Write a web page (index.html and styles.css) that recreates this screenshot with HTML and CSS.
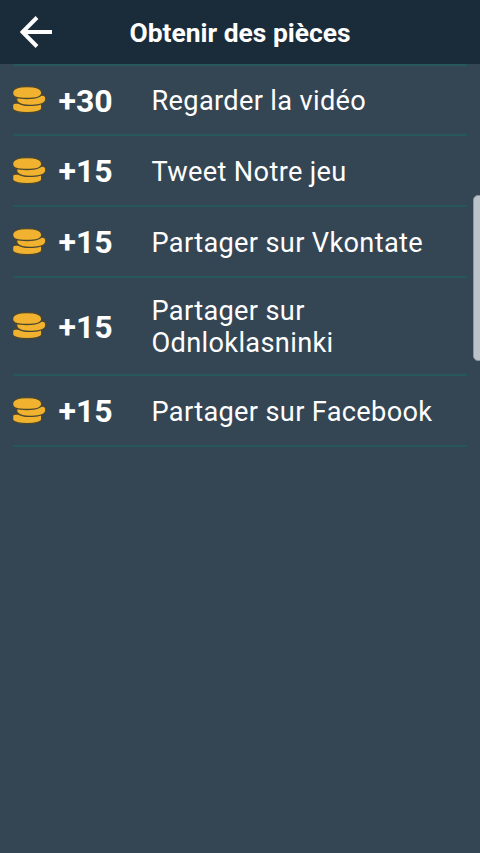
FILE: index.html
```html
<!DOCTYPE html>
<html lang="fr">
<head>
<meta charset="utf-8">
<title>Obtenir des pièces</title>
<link rel="stylesheet" href="styles.css">
</head>
<body>
<svg width="0" height="0" class="defs" aria-hidden="true">
  <symbol id="coins" viewBox="0 0 34 28">
    <g fill="#f0b22f" stroke="#4b472f" stroke-width="1.3">
      <path d="M-.4 19Q-.4 17 3 17H26Q28.7 17 28.7 19V22.3C28.7 28.2-.4 28.2-.4 22.3Z"/>
      <path d="M3.6 13C3.6 10 6 9 16 9H29C32.6 9 33.3 12 32.6 14.6C30.5 20.4 9 20.8 4.8 16.2Q3.6 15 3.6 13Z"/>
      <path d="M-.4 7C-.4 2.5 5 .7 14 .7S28.7 2.5 28.7 7S23 12.5 14 12.5S-.4 11.5-.4 7Z"/>
    </g>
  </symbol>
</svg>
<header class="bar">
  <svg class="back" viewBox="0 0 32 32"><path d="M17 1.5 2.5 16 17 30.5M3 16H32" fill="none" stroke="#fff" stroke-width="4"/></svg>
  <h1 class="title">Obtenir des pièces</h1>
</header>
<ul class="list">
  <li class="row first"><svg class="coin"><use href="#coins"/></svg><b class="amount">+30</b><span class="label">Regarder la vidéo</span></li>
  <li class="row"><svg class="coin"><use href="#coins"/></svg><b class="amount">+15</b><span class="label">Tweet Notre jeu</span></li>
  <li class="row"><svg class="coin"><use href="#coins"/></svg><b class="amount">+15</b><span class="label">Partager sur Vkontate</span></li>
  <li class="row tall"><svg class="coin"><use href="#coins"/></svg><b class="amount">+15</b><span class="label">Partager sur Odnloklasninki</span></li>
  <li class="row"><svg class="coin"><use href="#coins"/></svg><b class="amount">+15</b><span class="label">Partager sur Facebook</span></li>
</ul>
<div class="scrollbar"></div>
</body>
</html>
```
FILE: styles.css
```css
* { box-sizing: border-box; }
body {
  margin: 0;
  height: 853px;
  overflow: hidden;
  position: relative;
  background: #344554;
  color: #fff;
  font-family: Roboto, "Liberation Sans", sans-serif;
}
.defs { position: absolute; }
.bar {
  display: grid;
  grid-template-columns: 60px 1fr 60px;
  align-items: center;
  height: 64px;
  background: #1a2b3a;
}
.back { width: 32px; height: 32px; margin-left: 20px; }
.title {
  margin: 2px 0 0;
  text-align: center;
  white-space: nowrap;
  font-size: 26.4px;
  line-height: 32px;
  font-weight: 700;
}
.list {
  list-style: none;
  margin: 0 13px;
  padding: 0;
  border-top: 2px solid #26575a;
}
.row {
  display: grid;
  grid-template-columns: 45.5px 93px 1fr;
  align-items: center;
  height: 71px;
  border-bottom: 2px solid #26575a;
}
.row.first { height: 70px; }
.row.tall { height: 98px; }
.coin { width: 34px; height: 28px; overflow: visible; }
.amount {
  padding-top: 1px;
  font-size: 32px;
  line-height: 36px;
}
.first .amount { padding-top: 2px; }
.label {
  padding-top: 2px;
  font-size: 27.2px;
  line-height: 32px;
  letter-spacing: .33px;
}
.scrollbar {
  position: absolute;
  top: 195px;
  right: -4px;
  width: 11px;
  height: 166px;
  border: 1px solid #8d969f;
  border-radius: 5px;
  background: #bcc2ca;
}
```
